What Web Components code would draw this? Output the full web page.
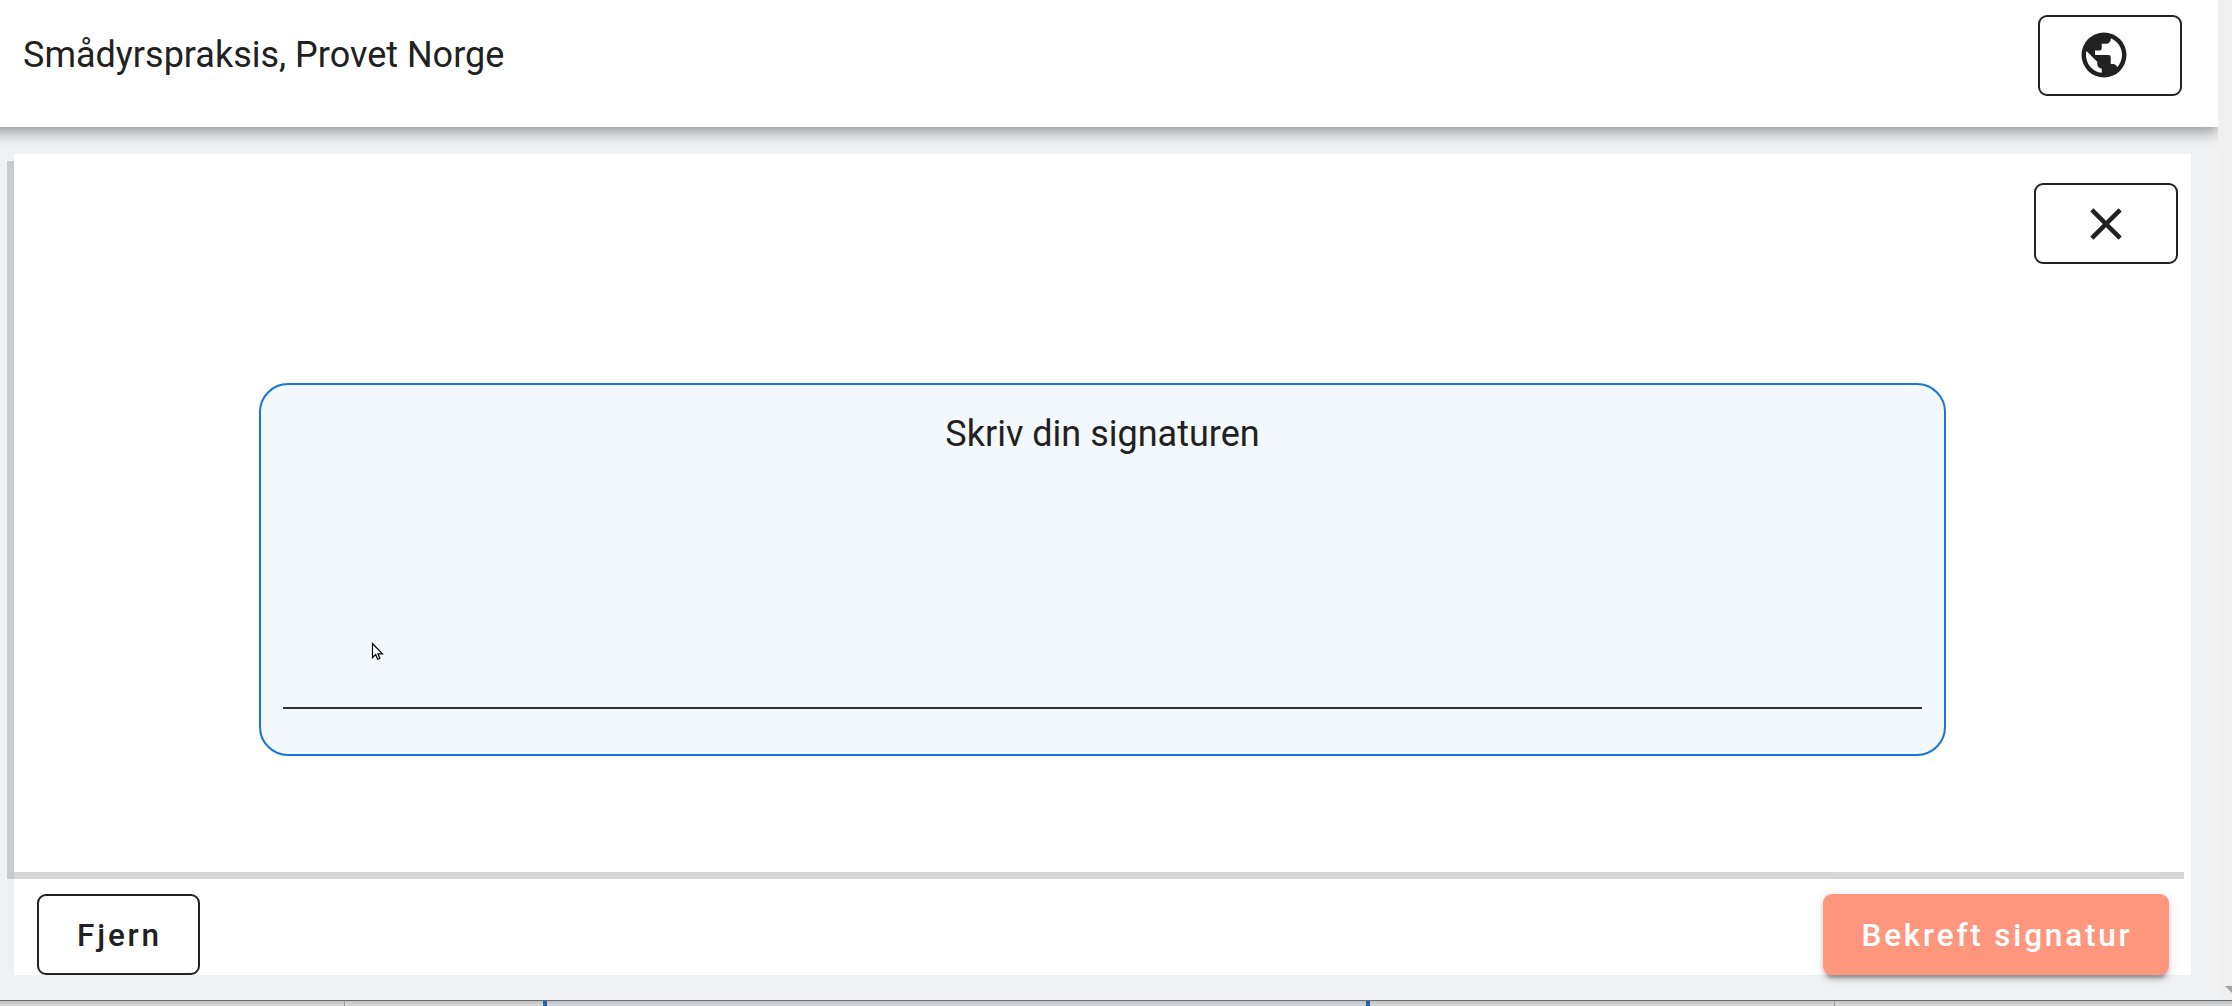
<!DOCTYPE html>
<html lang="no">
<head>
  <meta charset="UTF-8">
  <title>Smådyrspraksis, Provet Norge</title>
  <style>
    body {
      margin: 0;
      height: 1006px;
      overflow: hidden;
      background: #f0f1f3;
      color: #212121;
      font-family: Roboto, "Liberation Sans", sans-serif;
      font-size: 36px;
    }
  </style>
</head>
<body>
  <signature-page>
    <app-header slot="header">
      Smådyrspraksis, Provet Norge
      <app-button slot="action" kind="icon" style="--icon-margin: 0 11px 2px 0"><app-icon name="globe"></app-icon></app-button>
    </app-header>
    <signature-dialog>
      <app-button slot="close" kind="icon"><app-icon name="close"></app-icon></app-button>
      <signature-pad>Skriv din signaturen</signature-pad>
      <app-button slot="actions">Fjern</app-button>
      <app-button slot="actions" kind="primary">Bekreft signatur</app-button>
    </signature-dialog>
    <page-scrollbar slot="scrollbar"></page-scrollbar>
    <bottom-strip slot="bottom"></bottom-strip>
  </signature-page>

  <script>
    const define = ( name, html ) => {
      const template = document.createElement( 'template' );
      template.innerHTML = html;

      customElements.define( name, class extends HTMLElement {
        constructor () {
          super();
          this.attachShadow( { mode: 'open' } ).append( template.content.cloneNode( true ) );
        }
      } );
    };

    define( 'signature-page', `
      <style>
        :host {
          display: grid;
          grid-template: 1000px 6px / 2218px 14px;
          height: 1006px;
          overflow: hidden;
        }
        main {
          display: flex;
          flex-direction: column;
          gap: 27px;
          overflow: hidden;
        }
        ::slotted(bottom-strip) { grid-column: 1 / 3; }
      </style>
      <main>
        <slot name="header"></slot>
        <slot></slot>
      </main>
      <slot name="scrollbar"></slot>
      <slot name="bottom"></slot>
    ` );

    /* the header starts outside the page so its shadow has no left corner */
    define( 'app-header', `
      <style>
        :host {
          display: flex;
          justify-content: space-between;
          align-items: flex-start;
          box-sizing: border-box;
          height: 127px;
          margin-left: -30px;
          padding: 15px 36px 0 53px;
          background: #fff;
          box-shadow: 0 4.5px 9px -2.25px rgba(0, 0, 0, .2), 0 9px 11.25px rgba(0, 0, 0, .14), 0 2.25px 22.5px rgba(0, 0, 0, .12);
        }
        .title { line-height: 81px; }
      </style>
      <div class="title"><slot></slot></div>
      <slot name="action"></slot>
    ` );

    define( 'signature-dialog', `
      <style>
        :host {
          display: block;
          width: 2177px;
          margin-left: 14px;
          background: #fff;
        }
        .content {
          display: flex;
          flex-direction: column;
          box-sizing: border-box;
          height: 718px;
          padding: 29px 13px 0 0;
          box-shadow: -7px 7px 0 rgba(0, 0, 0, .16);
        }
        .close { align-self: flex-end; }
        .pad { margin: 119px 0 0 245px; }
        footer {
          display: flex;
          justify-content: space-between;
          padding: 22px 22px 0 23px;
        }
      </style>
      <div class="content">
        <div class="close"><slot name="close"></slot></div>
        <div class="pad"><slot></slot></div>
      </div>
      <footer><slot name="actions"></slot></footer>
    ` );

    define( 'signature-pad', `
      <style>
        :host {
          display: flex;
          flex-direction: column;
          justify-content: space-between;
          position: relative;
          box-sizing: border-box;
          width: 1687px;
          height: 373px;
          padding: 22px 22px 45px;
          border: 2px solid #1976d2;
          border-radius: 29px;
          background: #f3f8fc;
        }
        .label { text-align: center; line-height: 54px; }
        .line { height: 2px; background: #333; }
        svg { position: absolute; left: 110px; top: 257px; }
      </style>
      <div class="label"><slot></slot></div>
      <div class="line"></div>
      <svg width="14" height="19" viewBox="0 0 14 19">
        <path d="M1.5 1.5v14l3.2-3 2 4.7 2.2-1-2-4.4h4.6z" fill="#fff" stroke="#000" stroke-width="1.2"/>
      </svg>
    ` );

    define( 'app-button', `
      <style>
        :host {
          display: flex;
          justify-content: center;
          align-items: center;
          box-sizing: border-box;
          width: 163px;
          height: 81px;
          padding: 1px 0 0 2px;
          border: 2px solid #212121;
          border-radius: 9px;
          background: #fff;
          font-size: 31.5px;
          font-weight: 500;
          letter-spacing: 2.81px;
          white-space: nowrap;
        }
        :host([kind="icon"]) { width: 144px; padding: 0 1px 0 0; }
        :host([kind="primary"]) {
          width: 346px;
          border: 0;
          background: #ff977e;
          color: #fff;
          box-shadow: 0 6.75px 2.25px -4.5px rgba(0, 0, 0, .2), 0 4.5px 4.5px rgba(0, 0, 0, .14), 0 2.25px 11.25px rgba(0, 0, 0, .12);
        }
        ::slotted(app-icon) { margin: var(--icon-margin, 0); }
      </style>
      <slot></slot>
    ` );

    define( 'page-scrollbar', `
      <style>
        :host {
          display: flex;
          align-items: flex-end;
          justify-content: flex-end;
          background: #f0f0f0;
        }
        svg { display: block; margin-bottom: 7px; }
      </style>
      <svg width="7" height="7" viewBox="0 0 7 7"><path d="M0 0h7v7z" fill="#a3a3a3"/></svg>
    ` );

    define( 'bottom-strip', `
      <style>
        :host {
          display: grid;
          grid-template-columns: 344px 1px 198px 4px 819px 4px 464px 1px 1fr;
          border-top: 1px solid #6b6d6c;
          background: linear-gradient(#c2c2c2, #d8d8d8);
        }
        .rule { background: #999; }
        .edge { background: #1b66b5; }
        .active { background: linear-gradient(#bfc3c9, #d3d7dd); }
      </style>
      <i></i><i class="rule"></i><i></i><i class="edge"></i><i class="active"></i>
      <i class="edge"></i><i></i><i class="rule"></i><i></i>
    ` );

    const icons = {
      globe: 'M17.9 17.39c-.26-.8-1.01-1.39-1.9-1.39h-1v-3a1 1 0 0 0-1-1H8v-2h2a1 1 0 0 0 1-1V7h2a2 2 0 0 0 2-2v-.41c2.93 1.18 5 4.05 5 7.41 0 2.08-.8 3.97-2.1 5.39M11 19.93c-3.95-.49-7-3.85-7-7.93 0-.62.08-1.22.21-1.79L9 15v1a2 2 0 0 0 2 2m1-16A10 10 0 0 0 2 12a10 10 0 0 0 10 10 10 10 0 0 0 10-10A10 10 0 0 0 12 2z',
      close: 'M19 6.41 17.59 5 12 10.59 6.41 5 5 6.41 10.59 12 5 17.59 6.41 19 12 13.41 17.59 19 19 17.59 13.41 12z'
    };

    class AppIcon extends HTMLElement {
      constructor () {
        super();
        this.attachShadow( { mode: 'open' } );
      }

      connectedCallback () {
        const name = this.getAttribute( 'name' );
        this.shadowRoot.innerHTML = `
          <style>
            :host { display: block; width: 54px; height: 54px; }
            svg { display: block; fill: #212121; }
          </style>
          <svg width="54" height="54" viewBox="0 0 24 24"><path d="${ icons[ name ] }"/></svg>
        `;
      }
    }

    customElements.define( 'app-icon', AppIcon );
  </script>
</body>
</html>
